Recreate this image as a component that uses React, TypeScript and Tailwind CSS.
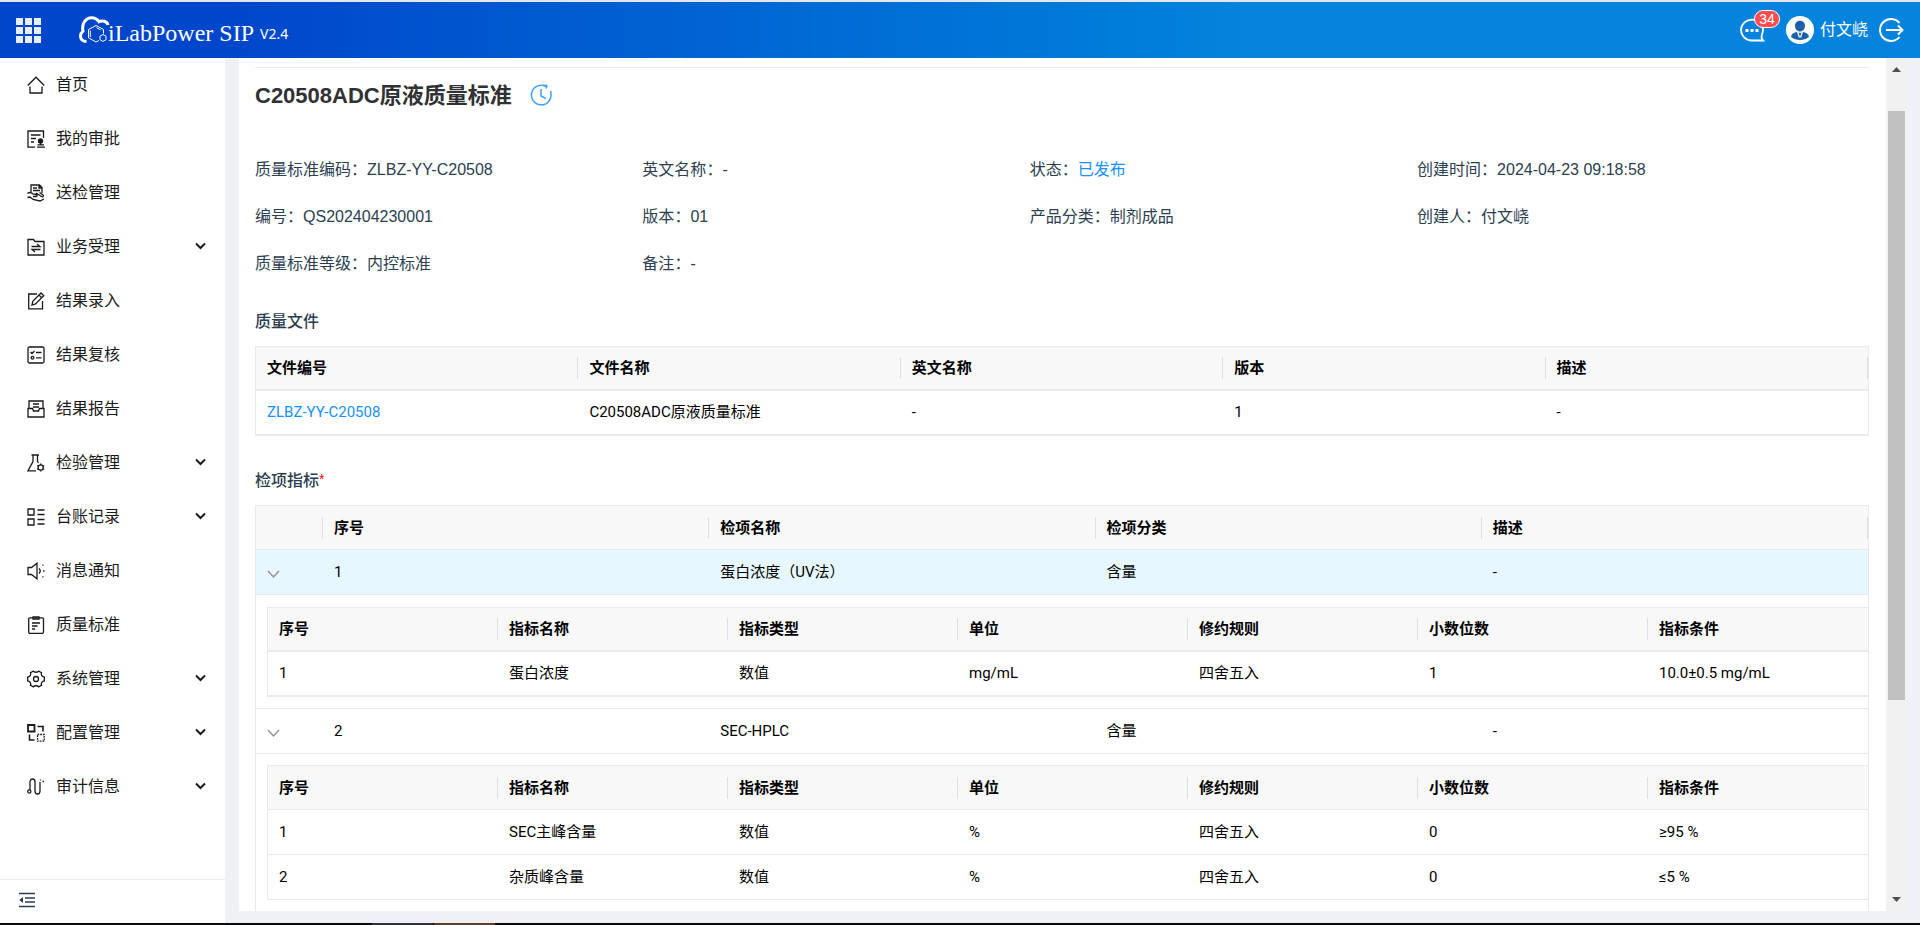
import type { ReactNode } from "react";

type MenuItem = {
  label: string;
  icon: ReactNode;
  expandable?: boolean;
};

type Indicator = string[];

type TestItem = {
  row: string[];
  indicators: Indicator[];
  active?: boolean;
  thick?: boolean;
};

const menu: MenuItem[] = [
  {
    label: "首页",
    icon: <path d="M.7 9.5 9 1.2l8.3 8.3M3 10.5V17h12v-6.5" />,
  },
  {
    label: "我的审批",
    icon: (
      <>
        <path d="M8 17.2H1V1h15.500v7M4 5h9.500M4 8.500h5M4 12h3" />
        <circle cx="13.5" cy="11" r="2" fill="currentColor" />
        <path d="M13.5 12v3M10.5 14.800h6.500M10 17.200h8" />
      </>
    ),
  },
  {
    label: "送检管理",
    icon: (
      <>
        <path d="M4 8V1h8.500L15 3.500V9M12 1v3h3M6 4h4M6 6.500h7" />
        <path d="M.5 9.500c2-1.500 4-1 5.500.5l3 .5c1.500.3 1.500 2 0 2H6M9 9l5.500 3.500c1.500 1 2.500-.5 1.500-1.500L12.500 8.500M.5 13.500l2.500-.5 3 2.500 7 1.500 4-2" />
      </>
    ),
  },
  {
    label: "业务受理",
    expandable: true,
    icon: (
      <path d="M1 17V1.500h5.500l1.500 2h9V17H1ZM4.500 8.500H13L10 6M13.500 11.500H5L8 14" />
    ),
  },
  {
    label: "结果录入",
    icon: (
      <path d="M10 2H1.700v14.800h13.800V9M5 13l.8-3.800L14 1l2.700 2.700-8.200 8.200L5 13ZM12 3l2.700 2.700" />
    ),
  },
  {
    label: "结果复核",
    icon: (
      <>
        <rect x="1" y="1" width="16" height="16" rx="1.5" />
        <path d="m3.500 6 1.500 1.500L7.500 5M9 6.500h5.500M9 11.800h5.500" />
        <circle cx="5.5" cy="11.8" r="1.4" />
      </>
    ),
  },
  {
    label: "结果报告",
    icon: (
      <path d="M2 8V1h14v7M1 8.500h4.500l1 2.500h5l1-2.500H17V17H1V8.500ZM6 4h6M6 7h6" />
    ),
  },
  {
    label: "检验管理",
    expandable: true,
    icon: (
      <>
        <path d="M4.500 1H12M6 1v6.500L1 16.800h8M10.500 1v6.500l1 1.500" />
        <circle cx="13.7" cy="13.5" r="2.6" />
        <path d="M13.700 9.500v1.400M13.700 16.100v1.400M10.200 11.500l1.200.7M16 14.800l1.200.7M10.200 15.500l1.200-.7M16 12.200l1.200-.7" />
      </>
    ),
  },
  {
    label: "台账记录",
    expandable: true,
    icon: (
      <path d="M1 1h6v6H1zM1 11h6v6H1zM10.500 2h7M10.500 6.500h7M10.500 11.500h7M10.500 16h7" />
    ),
  },
  {
    label: "消息通知",
    icon: (
      <>
        <path d="M1 5.500h3.500L10 1.200v15.600l-5.500-4.300H1v-7ZM12 6.500c1.500 1.500 1.500 3.500 0 5" />
        <path d="m15.500 3.500.8-.8M16 9h1.500M15.500 14.500l.8.8" />
      </>
    ),
  },
  {
    label: "质量标准",
    icon: (
      <>
        <rect x="1.7" y="1.8" width="14.8" height="15.5" rx="1.2" />
        <path d="M6 .8h6v2.200H6zM5 7h8M5 10h5.500M5 13h3" />
      </>
    ),
  },
  {
    label: "系统管理",
    expandable: true,
    icon: (
      <>
        <path d="M6.200 1.200c1 1.400 4.600 1.400 5.600 0l2.700 1.600c-.7 1.900.6 4 2.900 4.300v3.800c-2.300.3-3.600 2.400-2.900 4.300l-2.700 1.600c-1-1.400-4.600-1.400-5.600 0l-2.700-1.600c.7-1.900-.6-4-2.900-4.300V7.100c2.300-.3 3.600-2.400 2.900-4.300l2.700-1.600Z" />
        <circle cx="9" cy="9" r="2.5" />
      </>
    ),
  },
  {
    label: "配置管理",
    expandable: true,
    icon: (
      <>
        <path d="M1 1h6.500v6.500H1z" strokeWidth="1.8" />
        <path d="M10.500 2.500H16v5M2.500 10.500V16h5" strokeWidth="1.6" />
        <path d="M10.500 10.500h6.700v6.700h-6.700z" strokeDasharray="1.7 1" />
      </>
    ),
  },
  {
    label: "审计信息",
    expandable: true,
    icon: (
      <>
        <circle cx="2.3" cy="13.5" r="1.6" />
        <path d="M3 12V4c0-4 5-4 5 0v9c0 4 5 4 5 0V4M13.500 1.500v1M15.500 3.500H17" />
      </>
    ),
  },
];

const info = [
  ["质量标准编码", "ZLBZ-YY-C20508"],
  ["英文名称", "-"],
  ["状态", "已发布"],
  ["创建时间", "2024-04-23 09:18:58"],
  ["编号", "QS202404230001"],
  ["版本", "01"],
  ["产品分类", "制剂成品"],
  ["创建人", "付文峣"],
  ["质量标准等级", "内控标准"],
  ["备注", "-"],
];

const fileHeads = ["文件编号", "文件名称", "英文名称", "版本", "描述"];
const itemHeads = ["序号", "检项名称", "检项分类", "描述"];
const indicatorHeads = [
  "序号",
  "指标名称",
  "指标类型",
  "单位",
  "修约规则",
  "小数位数",
  "指标条件",
];

const items: TestItem[] = [
  {
    row: ["1", "蛋白浓度（UV法）", "含量", "-"],
    active: true,
    thick: true,
    indicators: [
      ["1", "蛋白浓度", "数值", "mg/mL", "四舍五入", "1", "10.0±0.5 mg/mL"],
    ],
  },
  {
    row: ["2", "SEC-HPLC", "含量", "-"],
    indicators: [
      ["1", "SEC主峰含量", "数值", "%", "四舍五入", "0", "≥95 %"],
      ["2", "杂质峰含量", "数值", "%", "四舍五入", "0", "≤5 %"],
    ],
  },
];

const HeadCell = ({ text, thick }: { text?: string; thick?: boolean }) => (
  <th
    className={`h-[44px] border-[#e8eaec] bg-[#f8f8f9] p-0 text-left font-bold ${
      thick ? "border-b-2" : "border-b"
    }`}
  >
    <div className="h-[22px] border-r border-[#dcdfe6] pl-[11px] leading-[22px]">
      {text}
    </div>
  </th>
);

const Cell = ({ children, thick }: { children: ReactNode; thick?: boolean }) => (
  <td
    className={`h-[45px] border-[#e8eaec] p-0 pl-[11px] ${
      thick ? "border-b-2" : "border-b"
    }`}
  >
    {children}
  </td>
);

const IndicatorTable = ({ rows, thick }: { rows: Indicator[]; thick?: boolean }) => (
  <div className="overflow-hidden border-t border-l border-[#e8eaec]">
    <table className="w-[calc(100%+10px)] table-fixed border-separate border-spacing-0">
      <thead>
        <tr>
          {indicatorHeads.map((head) => (
            <HeadCell key={head} text={head} thick={thick} />
          ))}
        </tr>
      </thead>
      <tbody>
        {rows.map((row) => (
          <tr key={row[0]}>
            {row.map((value, i) => (
              <Cell key={i} thick={thick}>
                {value}
              </Cell>
            ))}
          </tr>
        ))}
      </tbody>
    </table>
  </div>
);

const ItemRows = ({ item }: { item: TestItem }) => (
  <>
    <tr className={item.active ? "bg-[#e6f7ff]" : "bg-white"}>
      <Cell>
        <button type="button" aria-label="收起" className="mt-1 block">
          <svg width="14" height="14" viewBox="0 0 14 14" fill="none" stroke="#909399" strokeWidth="1.5">
            <path d="m1 4 5.500 6L12 4" />
          </svg>
        </button>
      </Cell>
      {item.row.map((value, i) => (
        <Cell key={i}>{value}</Cell>
      ))}
    </tr>
    <tr>
      <td
        colSpan={5}
        className={`border-b border-[#e8eaec] p-0 pb-[11px] pl-[11px] ${
          item.thick ? "pt-3" : "pt-[11px]"
        }`}
      >
        <IndicatorTable rows={item.indicators} thick={item.thick} />
      </td>
    </tr>
  </>
);

const Header = () => (
  <header className="flex h-[58px] shrink-0 items-center border-t-2 border-[#e4e7ee] bg-linear-to-r from-[#0046ca] from-12% to-[#0683dc] to-65% pr-4 pl-4 text-white">
    <button type="button" aria-label="应用" className="block">
      <svg width="25" height="25" viewBox="0 0 25 25" fill="#e8eefb">
        <path d="M0 0h7v7H0zM9 0h7v7H9zM18 0h7v7h-7zM0 9h7v7H0zM9 9h7v7H9zM18 9h7v7h-7zM0 18h7v7H0zM9 18h7v7H9zM18 18h7v7h-7z" />
      </svg>
    </button>
    <a href="#" className="ml-[38px] flex items-center">
      <svg width="31" height="28" viewBox="0 0 31 28" fill="none" stroke="#fff">
        <path
          d="M7.500 25.500c-4 0-6-2.500-6-5.500 0-2.500 1-3.500 2.500-4.800C2.500 8 6.500 1.700 12.500 1.700c3.500 0 5.800 1.500 7.500 4 3-1.500 8-.7 9 3.300"
          strokeWidth="3"
        />
        <path d="m17 9.500 7.500 4v4M20 24.500l-3 1.500-7.500-4.200v-8.300L17 9.500M11.300 14.500v6.500M17.500 11.700l4 2.200" strokeWidth="1" />
        <path d="m24 18.500 3 1.600v3.600l-3 1.700-3-1.700v-3.600l3-1.600Z" strokeWidth="1" />
      </svg>
      <span className="mt-[5px] -ml-0.5 font-['Liberation_Serif',serif] text-[24px] leading-7">
        iLabPower SIP
      </span>
      <span className="mt-[7px] ml-1.5 font-['Noto_Sans',sans-serif] text-sm">V2.4</span>
    </a>

    <div className="ml-auto flex items-center">
      <button type="button" aria-label="消息" className="relative mr-[21px]">
        <svg width="26" height="26" viewBox="0 0 26 26" fill="none" stroke="#fff" strokeWidth="1.8">
          <path d="M24 23.500H12A11 10.500 0 1 1 24 13c0 3-1.500 5-1.500 7 0 1.500.5 2.500 1.500 3.500Z" />
          <path d="M6.500 13.500h3M11.500 13.500h3M16.500 13.500h3" strokeWidth="3" />
        </svg>
        <span className="absolute -top-[7px] left-[15px] flex h-[18px] w-[26px] items-center justify-center rounded-full border border-white bg-[#ff4d4f] text-sm leading-none">
          34
        </span>
      </button>
      <svg width="28" height="28" viewBox="0 0 28 28">
        <circle cx="14" cy="14" r="14" fill="#fff" />
        <path d="M14 4.800c3 0 5 2.200 5 5.200s-2.200 5.500-5 5.500S9 13 9 10s2-5.200 5-5.200Z" fill="#1d5fa8" />
        <path d="M5 21c.3-3 3-4.500 6-5l3 1 3-1c3 .5 5.700 2 6 5-5 4-13 4-18 0Z" fill="#1d5fa8" />
        <path d="m11.500 15.500 2 6M16.500 15.500l-2 6" stroke="#fff" strokeWidth="1.2" />
      </svg>
      <span className="ml-1.5 text-base">付文峣</span>
      <button type="button" aria-label="退出" className="ml-[10px]">
        <svg width="26" height="26" viewBox="0 0 26 26" fill="none" stroke="#fff" strokeWidth="1.9">
          <path d="M21.500 6A11 11 0 1 0 21.500 20M8 13h16M20 8.500l4.500 4.500-4.500 4.500" />
        </svg>
      </button>
    </div>
  </header>
);

const Sidebar = () => (
  <aside className="flex w-[225px] shrink-0 flex-col bg-white text-[#1a1a1a]">
    <nav className="flex-1">
      {menu.map((item) => (
        <a key={item.label} href="#" className="flex h-[54px] items-center pr-[19px] pl-[27px]">
          <svg width="18" height="18" viewBox="0 0 18 18" fill="none" stroke="currentColor" strokeWidth="1.3">
            {item.icon}
          </svg>
          <span className="ml-[11px]">{item.label}</span>
          {item.expandable && (
            <svg
              className="mb-0.5 ml-auto"
              width="11"
              height="11"
              viewBox="0 0 11 11"
              fill="none"
              stroke="currentColor"
              strokeWidth="2"
            >
              <path d="m1 2.500 4.500 4.500L10 2.500" />
            </svg>
          )}
        </a>
      ))}
    </nav>
    <div className="flex h-[44px] items-center border-t border-[#ebedf0] pb-[3px] pl-[19px]">
      <button type="button" aria-label="收起菜单" className="text-[#2c3e50]">
        <svg width="16" height="16" viewBox="0 0 16 16" fill="none" stroke="currentColor" strokeWidth="1.4">
          <path d="M0 1.500h16M6 6h10M6 10h10M0 14.500h16" />
          <path d="M4 5v6L.3 8 4 5Z" fill="currentColor" stroke="none" />
        </svg>
      </button>
    </div>
  </aside>
);

const Scrollbar = () => (
  <div className="flex w-[21px] shrink-0 flex-col items-center bg-[#f1f1f1]">
    <svg className="mt-[9px]" width="9" height="5" viewBox="0 0 9 5" fill="#505050">
      <path d="M0 5 4.500 0 9 5z" />
    </svg>
    <div className="mt-[39px] h-[69%] w-[17px] bg-[#c1c1c1]" />
    <svg className="mt-auto mb-[9px]" width="9" height="5" viewBox="0 0 9 5" fill="#505050">
      <path d="M0 0 4.500 5 9 0z" />
    </svg>
  </div>
);

const SectionTitle = ({ children }: { children: ReactNode }) => (
  <h2 className="flex h-[50px] items-center pt-0.5 font-medium text-[#2c3e50]">{children}</h2>
);

const App = () => {
  return (
    <div className="flex h-screen flex-col bg-[#f0f2f5] font-['Liberation_Sans','Noto_Sans_CJK_SC',sans-serif] text-base">
      <Header />

      <div className="flex min-h-0 flex-1 bg-[#eff1f6]">
        <Sidebar />

        <div className="mr-[13px] mb-3 ml-[14px] flex min-w-0 flex-1">
          <main className="min-w-0 flex-1 overflow-hidden bg-white pt-[9px] pr-[17px] pl-4">
            <div className="flex h-[55px] items-center border-t border-[#ebedf0]">
              <h1 className="text-[22px] font-bold text-[#303133]">C20508ADC原液质量标准</h1>
              <button type="button" aria-label="历史记录" className="ml-[18px] text-[#409eff]">
                <svg width="22" height="22" viewBox="0 0 22 22" fill="none" stroke="currentColor" strokeWidth="1.5">
                  <path d="M16.500 2.800A9.800 9.800 0 1 0 20.800 9V7M11 5v7l5 2.500M13 1.300l3.800.2-.5 3" />
                </svg>
              </button>
            </div>

            <dl className="mt-6 grid w-[96%] grid-cols-4 text-[#2c3e50]">
              {info.map(([label, value]) => (
                <div key={label} className="flex h-[47px] items-center">
                  <dt>{label}：</dt>
                  <dd className={value === "已发布" ? "text-[#1890ff]" : ""}>{value}</dd>
                </div>
              ))}
            </dl>

            <div className="mt-[9px]">
              <SectionTitle>质量文件</SectionTitle>
              <div className="border-x border-t border-[#e8eaec] font-[Roboto,'Noto_Sans_CJK_SC',sans-serif] text-[15px] text-black">
                <table className="w-full table-fixed border-separate border-spacing-0">
                  <thead>
                    <tr>
                      {fileHeads.map((head) => (
                        <HeadCell key={head} text={head} thick />
                      ))}
                    </tr>
                  </thead>
                  <tbody>
                    <tr>
                      <Cell thick>
                        <a href="#" className="text-[#1890ff]">
                          ZLBZ-YY-C20508
                        </a>
                      </Cell>
                      <Cell thick>C20508ADC原液质量标准</Cell>
                      <Cell thick>-</Cell>
                      <Cell thick>1</Cell>
                      <Cell thick>-</Cell>
                    </tr>
                  </tbody>
                </table>
              </div>
            </div>

            <div className="mt-[19px]">
              <SectionTitle>
                检项指标<span className="mb-1 text-sm text-[#ff0000]">*</span>
              </SectionTitle>
              <div className="border-x border-t border-[#e8eaec] font-[Roboto,'Noto_Sans_CJK_SC',sans-serif] text-[15px] text-black">
                <table className="w-full table-fixed border-separate border-spacing-0">
                  <colgroup>
                    <col className="w-[67px]" />
                    <col />
                    <col />
                    <col />
                    <col />
                  </colgroup>
                  <thead>
                    <tr>
                      <HeadCell />
                      {itemHeads.map((head) => (
                        <HeadCell key={head} text={head} />
                      ))}
                    </tr>
                  </thead>
                  <tbody>
                    {items.map((item) => (
                      <ItemRows key={item.row[0]} item={item} />
                    ))}
                  </tbody>
                </table>
              </div>
              <div className="h-20 border-x border-[#e8eaec]" />
            </div>
          </main>
          <Scrollbar />
        </div>
      </div>

      {/* dock edge along the bottom of the window */}
      <div className="flex h-[2px] shrink-0 bg-[#0b0a0f]">
        <div className="ml-[372px] w-[61px] bg-[#333333]" />
        <div className="ml-px w-[61px] bg-[#5f3c26]" />
      </div>
    </div>
  );
};

export default App;
